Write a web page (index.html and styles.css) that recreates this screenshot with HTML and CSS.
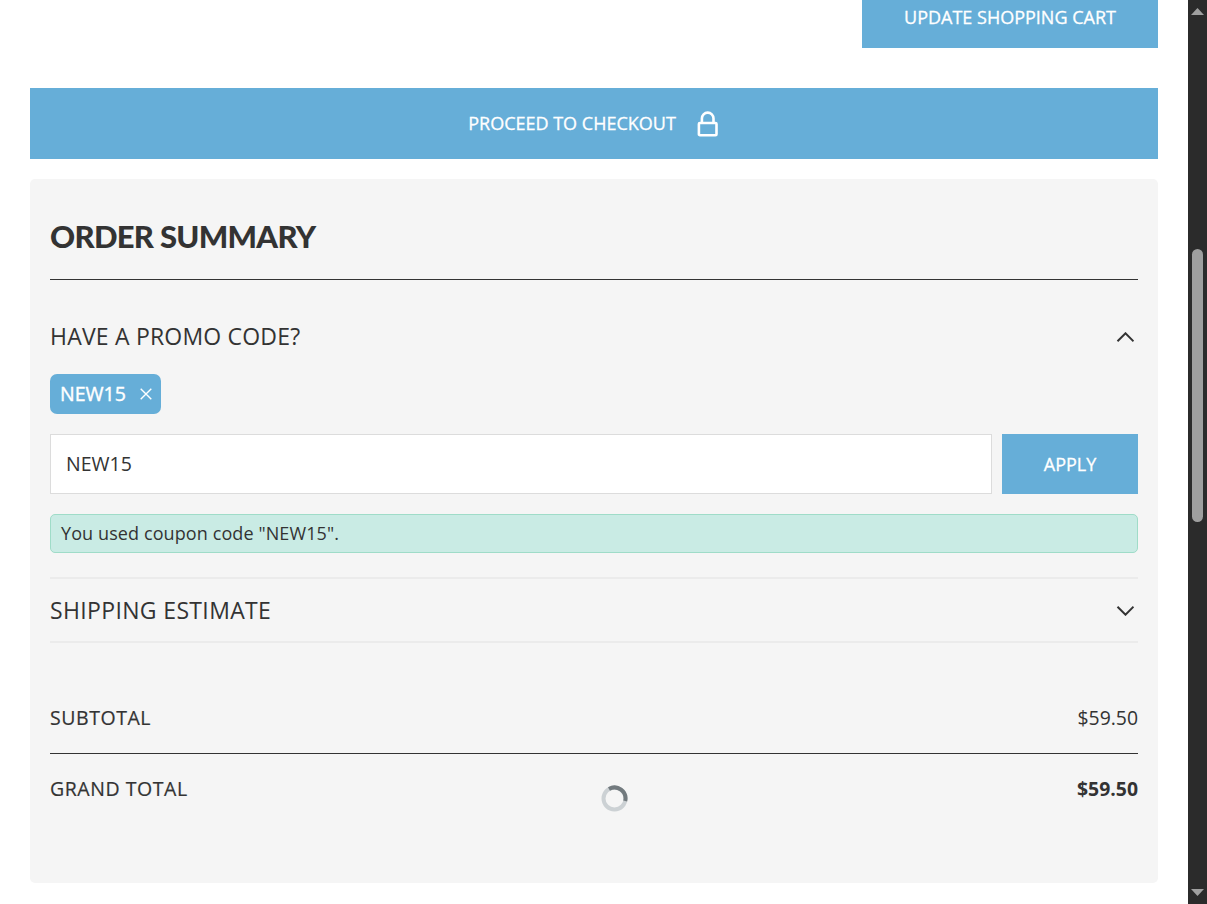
FILE: index.html
```html
<!DOCTYPE html>
<html lang="en">
<head>
    <meta charset="UTF-8">
    <meta name="viewport" content="width=device-width, initial-scale=1.0">
    <title>Shopping Cart</title>
    <link rel="stylesheet" href="styles.css">
</head>
<body>
    <main class="cart">
        <div class="cart-actions">
            <button class="btn btn-update">Update Shopping Cart</button>
        </div>

        <button class="btn btn-checkout">
            <span>Proceed to Checkout</span>
            <svg class="lock" width="22" height="26" viewBox="0 0 22 26">
                <rect x="1.9" y="12" width="17.6" height="12.2" rx="1"/>
                <path d="M4.9 12V7.4a5.8 5.8 0 0 1 11.6 0V12"/>
            </svg>
        </button>

        <section class="summary">
            <h2 class="summary-title">Order Summary</h2>

            <!-- Promo code -->
            <div class="block-head promo-head">
                <h3>Have a promo code?</h3>
                <svg class="chevron" width="18" height="11" viewBox="0 0 18 11"><path d="M1.5 9.3l8-8 8 8"/></svg>
            </div>
            <div class="promo-body">
                <div class="tag">
                    <span>NEW15</span>
                    <svg class="tag-close" width="12" height="12" viewBox="0 0 12 12"><path d="M.7.7l10.6 10.6M11.3.7L.7 11.3"/></svg>
                </div>
                <form class="promo-form">
                    <input class="promo-input" type="text" value="NEW15">
                    <button class="btn btn-apply" type="button">Apply</button>
                </form>
                <div class="message">You used coupon code "NEW15".</div>
            </div>

            <!-- Shipping -->
            <div class="block-head shipping-head">
                <h3>Shipping Estimate</h3>
                <svg class="chevron" width="18" height="11" viewBox="0 0 18 11"><path d="M1.5 1.7l8 8 8-8"/></svg>
            </div>

            <!-- Totals -->
            <div class="total-row subtotal">
                <span class="label">Subtotal</span>
                <span class="price">$59.50</span>
            </div>
            <div class="total-row grand">
                <span class="label">Grand Total</span>
                <svg class="loader" width="28" height="28" viewBox="0 0 28 28">
                    <circle cx="14.5" cy="14.5" r="11"/>
                    <path d="M9 5A11 11 0 0 1 25.2 17"/>
                </svg>
                <strong class="price">$59.50</strong>
            </div>
        </section>
    </main>

    <div class="scrollbar">
        <svg width="13" height="7" viewBox="0 0 13 7"><path d="M0 7L6.5 0L13 7z"/></svg>
        <div class="thumb"></div>
        <svg width="13" height="7" viewBox="0 0 13 7"><path d="M0 0L6.5 7L13 0z"/></svg>
    </div>
</body>
</html>
```
FILE: styles.css
```css
* {
    box-sizing: border-box;
}

body {
    margin: 0;
    display: flex;
    height: 904px;
    overflow: hidden;
    background: #fff;
    color: #333;
    font-family: "Open Sans", sans-serif;
}

h2, h3 {
    margin: 0;
    text-transform: uppercase;
}

svg {
    display: block;
    flex: none;
}

.cart {
    width: 1188px;
    padding: 0 30px;
}

.btn {
    padding: 0;
    border: none;
    background: #66aed8;
    color: #fff;
    font-family: inherit;
    font-size: 18px;
    text-transform: uppercase;
    -webkit-text-stroke: 0.3px #fff;
}

.cart-actions {
    display: flex;
    justify-content: flex-end;
    height: 48px;
    margin-bottom: 40px;
}

.btn-update {
    width: 296px;
    padding-bottom: 15px;
}

.btn-checkout {
    display: flex;
    justify-content: center;
    align-items: center;
    gap: 21px;
    width: 100%;
    height: 71px;
    margin-bottom: 20px;
    padding: 0 1px 2px 0;
}

.lock {
    margin-top: 3px;
    fill: none;
    stroke: #fff;
    stroke-width: 2.6;
}

.summary {
    height: 704px;
    padding: 0 20px;
    border-radius: 5px;
    background: #f5f5f5;
}

.summary-title {
    height: 101px;
    padding-top: 37px;
    border-bottom: 1px solid #333;
    font-family: Lato, sans-serif;
    font-size: 31px;
    font-weight: 900;
    line-height: 40px;
    letter-spacing: -0.7px;
}

.block-head {
    display: flex;
    justify-content: space-between;
    align-items: center;
    padding-right: 4px;
}

.block-head h3 {
    font-size: 23px;
    font-weight: 400;
    line-height: 32px;
    letter-spacing: 0.2px;
}

.chevron {
    fill: none;
    stroke: #333;
    stroke-width: 2;
}

.promo-head {
    padding-top: 40px;
}

.promo-head .chevron {
    margin-top: 2px;
}

.promo-body {
    padding: 22px 0 24px;
}

.tag {
    display: flex;
    align-items: center;
    justify-content: space-between;
    width: 111px;
    height: 40px;
    padding: 0 9px 0 10px;
    border-radius: 7px;
    background: #66aed8;
    color: #fff;
    font-size: 19.5px;
    -webkit-text-stroke: 0.4px #fff;
}

.tag span {
    padding-bottom: 2px;
}

.tag-close {
    fill: none;
    stroke: #fff;
    stroke-width: 1.4;
}

.promo-form {
    display: flex;
    gap: 10px;
    margin: 20px 0;
}

.promo-input {
    flex: 1;
    height: 60px;
    padding: 0 15px 2px;
    border: 1px solid #dcdcdc;
    background: #fff;
    color: #333;
    font-family: inherit;
    font-size: 19.5px;
}

.btn-apply {
    width: 136px;
}

.message {
    height: 39px;
    padding-left: 10px;
    border: 1px solid #9fdcc8;
    border-radius: 5px;
    background: #c9ebe4;
    font-size: 18px;
    line-height: 36px;
    letter-spacing: 0.1px;
}

.shipping-head {
    height: 66px;
    border-top: 2px solid #ebebeb;
    border-bottom: 2px solid #ebebeb;
}

.shipping-head h3 {
    letter-spacing: 0.35px;
}

.shipping-head .chevron {
    margin-top: 1px;
}

.total-row {
    display: flex;
    justify-content: space-between;
    font-size: 19.4px;
    line-height: 30px;
}

.total-row .label {
    font-size: 19.5px;
    letter-spacing: 0.55px;
    text-transform: uppercase;
    -webkit-text-stroke: 0.2px #333;
}

.subtotal {
    margin-top: 60px;
    padding-bottom: 20px;
    border-bottom: 1px solid #333;
}

.grand {
    padding-top: 20px;
    position: relative;
}

.loader {
    position: absolute;
    left: 550px;
    top: 30px;
    fill: none;
    stroke: #ccd1d4;
    stroke-width: 4;
}

.loader path {
    stroke: #727a7e;
}

.scrollbar {
    display: flex;
    flex-direction: column;
    align-items: center;
    justify-content: space-between;
    width: 19px;
    padding: 8px 0;
    background: #2b2b2b;
}

.scrollbar svg {
    fill: #a0a0a0;
}

.thumb {
    width: 11px;
    height: 273px;
    margin-bottom: 133px;
    border-radius: 6px;
    background: #9f9f9f;
}
```
